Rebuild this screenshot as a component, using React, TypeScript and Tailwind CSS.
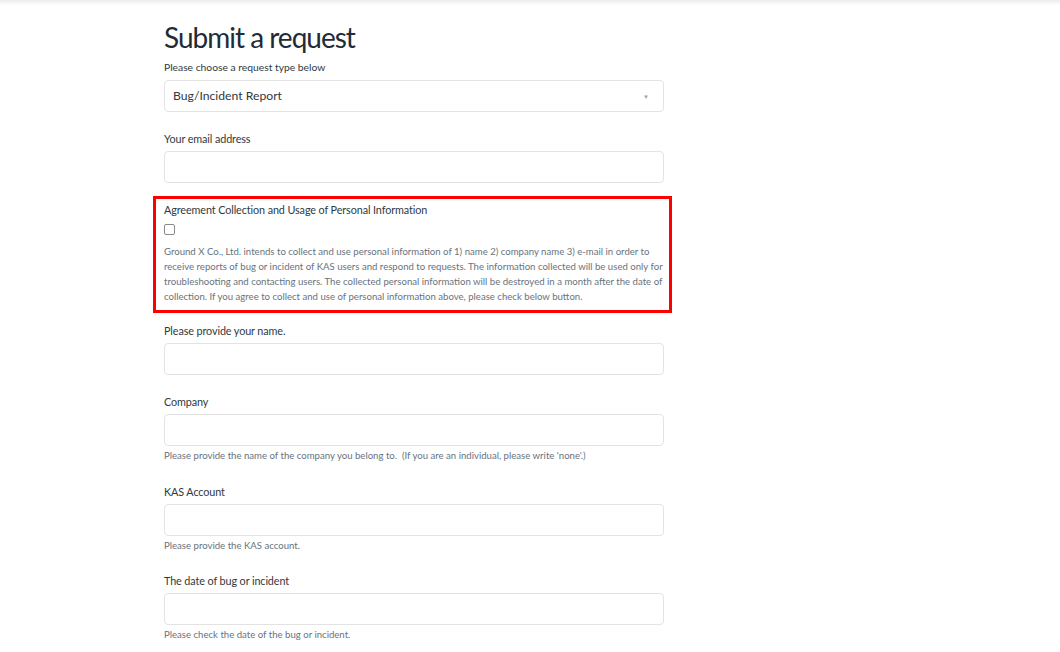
import { useState } from 'react';

// Request form page — single column, left-offset like the help-center layout

const font = { fontFamily: 'Lato, "Noto Sans", sans-serif' };

function Label({ children }: { children: React.ReactNode }) {
  return <label className="block text-[10.8px] leading-[16px] text-[#2f3941] tracking-[-0.1px]">{children}</label>;
}

function Hint({ children }: { children: React.ReactNode }) {
  return <p className="mt-[3px] text-[9.6px] leading-[14px] text-[#68737d]">{children}</p>;
}

function TextField() {
  return (
    <input
      type="text"
      className="mt-[4px] block h-[32px] w-[500px] rounded-[4px] border border-[#e3e3e3] bg-white px-2 text-[13px] focus:outline-none"
    />
  );
}

export default function App() {
  const [agreed, setAgreed] = useState(false);

  return (
    <div className="min-h-screen bg-white" style={font}>
      <div className="h-[5px] bg-gradient-to-b from-[#ececec] to-white" />

      <div className="pl-[164px]">
        <h1 className="mt-[15px] text-[28px] leading-[34px] font-normal text-[#1f2b36] tracking-[-1px]">Submit a request</h1>
        <p className="mt-[6px] text-[10.3px] leading-[14px] text-[#2f3941]">Please choose a request type below</p>
        <div className="mt-[6px] flex h-[32px] w-[500px] items-center justify-between rounded-[4px] border border-[#e3e3e3] pl-[8px] pr-[14px]">
          <span className="text-[12.2px] text-[#2f3941]">Bug/Incident Report</span>
          <span className="text-[6px] text-[#9aa3ab]">▼</span>
        </div>

        <div className="mt-[19px]">
          <Label>Your email address</Label>
          <TextField />
        </div>
      </div>

      <div className="ml-[153px] mt-[13px] w-[519px] border-[3px] border-[#ff0000] pl-[8px] pr-[4px] pt-[3px] pb-[6px]">
        <Label>Agreement Collection and Usage of Personal Information</Label>
        <input
          type="checkbox"
          checked={agreed}
          onChange={(e) => setAgreed(e.target.checked)}
          className="mt-[6px] block h-[11px] w-[11px] appearance-none rounded-[2px] border border-[#8a8a8a] bg-white"
        />
        <p className="mt-[9px] whitespace-nowrap text-[9.6px] leading-[15px] text-[#68737d]">
          Ground X Co., Ltd. intends to collect and use personal information of 1) name 2) company name 3) e-mail in order to
          <br />
          receive reports of bug or incident of KAS users and respond to requests. The information collected will be used only for
          <br />
          troubleshooting and contacting users. The collected personal information will be destroyed in a month after the date of
          <br />
          collection. If you agree to collect and use of personal information above, please check below button.
        </p>
      </div>

      <div className="pl-[164px]">
        <div className="mt-[10px]">
          <Label>Please provide your name.</Label>
          <TextField />
        </div>

        <div className="mt-[19px]">
          <Label>Company</Label>
          <TextField />
          <Hint>Please provide the name of the company you belong to. &nbsp;(If you are an individual, please write 'none'.)</Hint>
        </div>

        <div className="mt-[21px]">
          <Label>KAS Account</Label>
          <TextField />
          <Hint>Please provide the KAS account.</Hint>
        </div>

        <div className="mt-[20px]">
          <Label>The date of bug or incident</Label>
          <TextField />
          <Hint>Please check the date of the bug or incident.</Hint>
        </div>
      </div>
    </div>
  );
}
